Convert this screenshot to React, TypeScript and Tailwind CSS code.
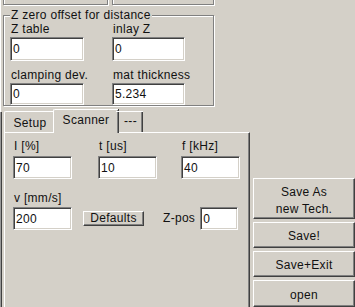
import type { ReactNode } from "react";

const etched = "border border-[#808080] shadow-[inset_1px_1px_0_#ffffff,1px_1px_0_#ffffff]";
const sunken =
	"border border-t-[#808080] border-l-[#808080] border-b-white border-r-white shadow-[inset_1px_1px_0_#404040,inset_-1px_-1px_0_#d4d0c8] bg-white";
const raised =
	"border border-t-white border-l-white border-b-[#404040] border-r-[#404040] shadow-[inset_-1px_-1px_0_#808080] bg-[#d4d0c8]";

const Field = ({ value, className }: { value: string; className: string }) => (
	<div className={`${sunken} ${className} flex items-center pl-[2px] pt-[1px]`}>{value}</div>
);

const Label = ({ children }: { children: ReactNode }) => <div className="pl-[1px] whitespace-nowrap">{children}</div>;

const SideButton = ({ children, className }: { children: ReactNode; className: string }) => (
	<div className={`${raised} ${className} w-[102px] flex flex-col items-center justify-center text-center`}>
		{children}
	</div>
);

export default function App() {
	return (
		<div className="relative flex h-[307px] w-[355px] overflow-hidden bg-[#d4d0c8] text-[12px] leading-[13px] tracking-[0.3px] text-[#111] font-['Liberation_Sans',Arial,sans-serif]">
			{/* outer frame edge */}
			<div className="flex w-[2px] shrink-0 flex-col">
				<div className="h-[112px] border-l border-l-white" />
				<div className="flex-1 border-l border-r border-l-[#9a9a9a] border-r-[#404040]" />
			</div>

			<div className="flex w-[248px] shrink-0 flex-col">
				{/* bottoms of the two boxes above */}
				<div className="-mt-[10px] flex h-[15px]">
					<div className={`${etched} ml-[1px] h-[15px] w-[105px]`} />
					<div className={`${etched} ml-[4px] h-[15px] w-[102px]`} />
				</div>

				{/* Z zero offset group */}
				<div className={`${etched} relative ml-[1px] mt-[10px] h-[93px] w-[211px]`}>
					<div className="absolute -top-[7px] left-[6px] bg-[#d4d0c8] px-[1px]">Z zero offset for distance</div>
					<div className="grid grid-cols-[102px_74px] pl-[6px] pt-[7px]">
						<div>
							<Label>Z table</Label>
							<Field value="0" className="mt-[1px] h-[24px] w-[74px]" />
						</div>
						<div>
							<Label>inlay Z</Label>
							<Field value="0" className="mt-[1px] h-[24px] w-[73px]" />
						</div>
						<div className="mt-[8px]">
							<Label>clamping dev.</Label>
							<Field value="0" className="mt-[1px] h-[22px] w-[74px]" />
						</div>
						<div className="mt-[8px]">
							<Label>mat thickness</Label>
							<Field value="5.234" className="mt-[1px] h-[22px] w-[73px]" />
						</div>
					</div>
				</div>

				{/* tabs */}
				<div className="relative z-10 mt-[3px] flex h-[23px] items-end pl-[2px]">
					<div className="flex h-[21px] w-[51px] justify-center rounded-tl-[2px] border-l border-t border-white pt-[5px] shadow-[1px_0_0_#404040]">
						Setup
					</div>
					<div className="-mx-[2px] -mb-[1px] flex h-[24px] w-[65px] justify-center rounded-tl-[2px] border-l border-t border-white bg-[#d4d0c8] pt-[4px] shadow-[1px_0_0_#404040,inset_-1px_0_0_#808080]">
						Scanner
					</div>
					<div className="flex h-[21px] w-[27px] justify-center border-t border-white pl-[2px] pt-[3px] shadow-[inset_-1px_0_0_#404040,inset_-2px_0_0_#808080]">
						---
					</div>
				</div>
				<div className="ml-[2px] h-[200px] w-[246px] border-l border-t border-l-white border-t-white border-r border-r-[#404040] shadow-[inset_-1px_0_0_#808080]">
					<div className="grid grid-cols-[85px_83px_59px] pl-[8px] pt-[7px]">
						<div>
							<Label>I [%]</Label>
							<Field value="70" className="mt-[3px] h-[23px] w-[59px]" />
						</div>
						<div>
							<Label>t [us]</Label>
							<Field value="10" className="mt-[3px] h-[23px] w-[59px]" />
						</div>
						<div>
							<Label>f [kHz]</Label>
							<Field value="40" className="mt-[3px] h-[23px] w-[59px]" />
						</div>
					</div>
					<div className="mt-[13px] pl-[8px]">
						<Label>v [mm/s]</Label>
						<div className="mt-[2px] flex items-center">
							<Field value="200" className="h-[23px] w-[59px]" />
							<div className={`${raised} ml-[11px] flex h-[15px] w-[61px] items-center justify-center`}>Defaults</div>
							<div className="ml-[19px]">Z-pos</div>
							<Field value="0" className="ml-[5px] h-[23px] w-[38px]" />
						</div>
					</div>
				</div>
			</div>

			{/* side buttons */}
			<div className="flex flex-col gap-[3px] pl-[3px] pt-[178px]">
				<SideButton className="h-[42px] pt-[5px] leading-[17px]">
					<div>Save As</div>
					<div>new Tech.</div>
				</SideButton>
				<SideButton className="h-[29px] pt-[4px]">Save!</SideButton>
				<SideButton className="h-[30px] pt-[2px]">Save+Exit</SideButton>
				<SideButton className="h-[30px] pt-[4px]">open</SideButton>
			</div>
		</div>
	);
}
